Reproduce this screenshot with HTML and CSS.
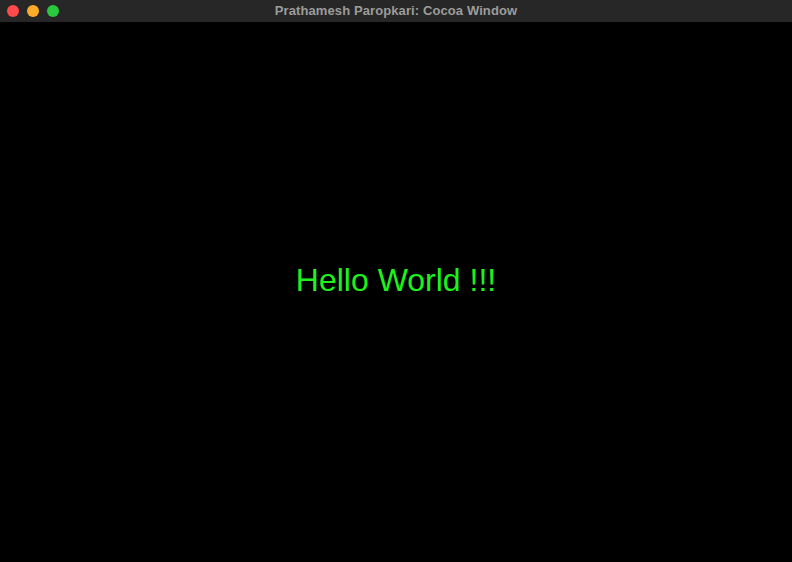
FILE: index.html
```html
<!DOCTYPE html>
<html>
<head>
<meta charset="utf-8">
<link rel="stylesheet" href="styles.css">
</head>
<body>
<div class="window">
  <div class="titlebar">
    <div class="lights">
      <span class="light red"></span>
      <span class="light yellow"></span>
      <span class="light green"></span>
    </div>
    <div class="title">Prathamesh Paropkari: Cocoa Window</div>
  </div>
  <div class="content">
    <div class="hello">Hello World !!!</div>
  </div>
</div>
</body>
</html>
```
FILE: styles.css
```css
html, body {
  margin: 0;
  padding: 0;
  background: #000;
}
.window {
  width: 792px;
  height: 562px;
  display: flex;
  flex-direction: column;
  background: #000;
}
.titlebar {
  height: 22px;
  flex: 0 0 22px;
  background: #262726;
  position: relative;
  display: flex;
  align-items: center;
  justify-content: center;
}
.lights {
  position: absolute;
  left: 7px;
  top: 5px;
  display: flex;
  gap: 8px;
}
.light {
  width: 12px;
  height: 12px;
  border-radius: 50%;
  display: block;
}
.red { background: #fe4a4a; }
.yellow { background: #fdac2a; }
.green { background: #2ac83f; }
.title {
  font-family: "Liberation Sans", Arial, sans-serif;
  font-weight: bold;
  font-size: 13px;
  color: #9c9c9c;
  letter-spacing: 0.1px;
  margin-top: -1px;
}
.content {
  flex: 1;
  display: flex;
  align-items: center;
  justify-content: center;
}
.hello {
  font-family: "Liberation Sans", Arial, sans-serif;
  font-size: 32px;
  color: #1ef21a;
  margin-bottom: 24px;
}
```
